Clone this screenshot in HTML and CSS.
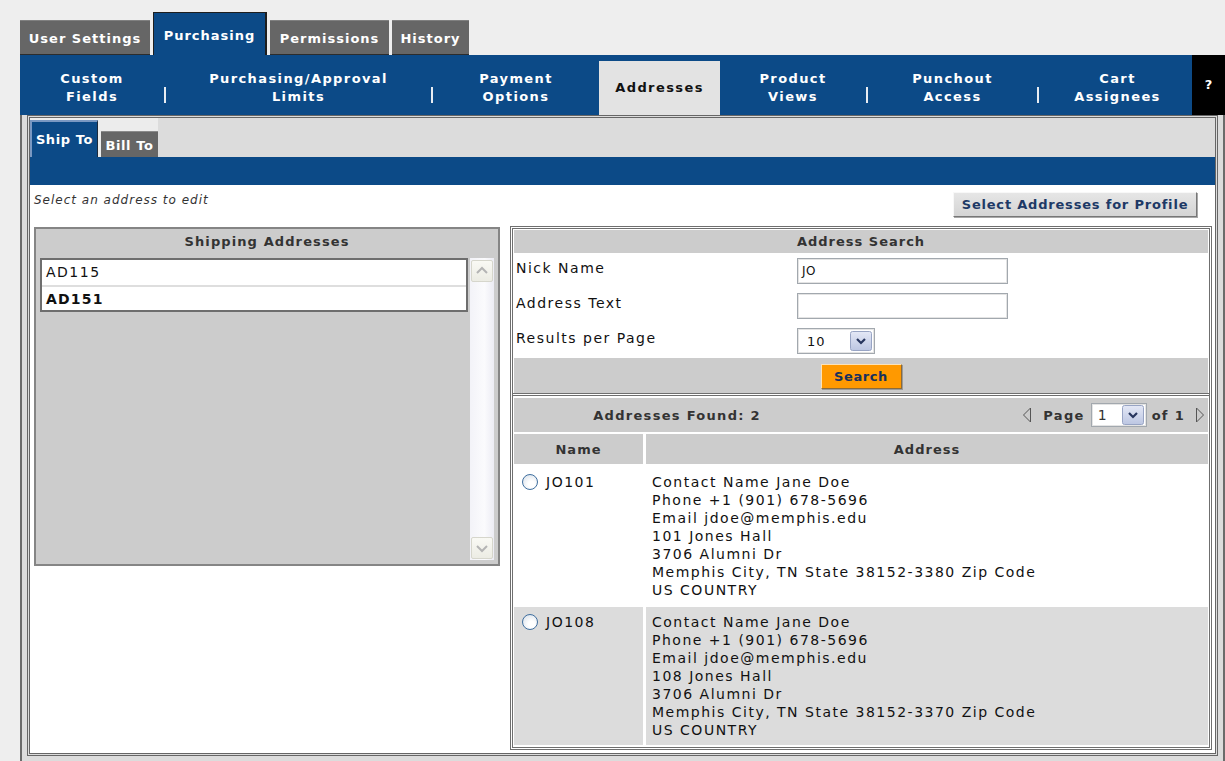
FILE: index.html
```html
<!DOCTYPE html>
<html lang="en">
<head>
<meta charset="utf-8">
<title>Purchasing - Addresses</title>
<link rel="stylesheet" href="styles.css">
</head>
<body>
<div class="page">
  <nav class="top-tabs">
    <a class="ttab t-user">User Settings</a>
    <a class="ttab t-purch current">Purchasing</a>
    <a class="ttab t-perm">Permissions</a>
    <a class="ttab t-hist">History</a>
  </nav>

  <nav class="subnav">
    <a class="nav-item n1">Custom<br>Fields</a>
    <span class="nav-sep"></span>
    <a class="nav-item n2">Purchasing/Approval<br>Limits</a>
    <span class="nav-sep"></span>
    <a class="nav-item n3">Payment<br>Options</a>
    <a class="nav-item n4 current">Addresses</a>
    <a class="nav-item n5">Product<br>Views</a>
    <span class="nav-sep"></span>
    <a class="nav-item n6">Punchout<br>Access</a>
    <span class="nav-sep"></span>
    <a class="nav-item n7">Cart<br>Assignees</a>
    <a class="nav-help">?</a>
  </nav>

  <div class="shell">
    <div class="frame">
      <div class="addr-tabs">
        <a class="atab ship">Ship To</a>
        <a class="atab bill">Bill To</a>
      </div>
      <div class="bluebar"></div>

      <div class="content">
        <div class="toolbar">
          <span class="hint">Select an address to edit</span>
          <button class="btn-profile" type="button">Select Addresses for Profile</button>
        </div>

        <div class="panels">
          <!-- saved shipping addresses -->
          <section class="ship-panel">
            <h2 class="ship-head">Shipping Addresses</h2>
            <div class="ship-body">
              <ul class="addr-list">
                <li>AD115</li>
                <li class="sel">AD151</li>
              </ul>
              <div class="scrollbar">
                <span class="sb-btn"><svg width="22" height="22" viewBox="0 0 22 22"><polyline points="6,13 11,8 16,13" fill="none" stroke="#b4b4b4" stroke-width="2"/></svg></span>
                <span class="sb-btn"><svg width="22" height="22" viewBox="0 0 22 22"><polyline points="6,9 11,14 16,9" fill="none" stroke="#b4b4b4" stroke-width="2"/></svg></span>
              </div>
            </div>
          </section>

          <!-- search form and results -->
          <section class="search-panel">
            <div class="search-box">
              <h2 class="search-head">Address Search</h2>
              <div class="form">
                <label class="f-label">Nick Name</label>
                <div class="f-ctrl"><span class="field">JO</span></div>
                <label class="f-label">Address Text</label>
                <div class="f-ctrl"><span class="field"></span></div>
                <label class="f-label">Results per Page</label>
                <div class="f-ctrl">
                  <span class="combo per-page"><span class="combo-val">10</span>
                    <svg class="combo-btn" width="22" height="20" viewBox="0 0 22 20"><defs><linearGradient id="cb1" x1="0" y1="0" x2="0" y2="1"><stop offset="0" stop-color="#e4e8f6"/><stop offset="1" stop-color="#bcc6e2"/></linearGradient></defs><rect x="0.5" y="0.5" width="21" height="19" rx="2" fill="url(#cb1)" stroke="#98a4c4"/><polyline points="7,8 11,12 15,8" fill="none" stroke="#27355e" stroke-width="2.2"/></svg>
                  </span>
                </div>
              </div>
              <div class="search-bar"><button class="btn-search" type="button">Search</button></div>
            </div>

            <div class="results">
              <div class="res-head">
                <span class="found">Addresses Found: 2</span>
                <span class="pager">
                  <svg class="tri" width="10" height="16" viewBox="0 0 10 16"><polygon points="8.5,1 1.5,8 8.5,15" fill="none" stroke="#555" stroke-width="1"/></svg>
                  <span class="pg-label">Page</span>
                  <span class="combo page-sel"><span class="combo-val">1</span>
                    <svg class="combo-btn" width="22" height="20" viewBox="0 0 22 20"><defs><linearGradient id="cb2" x1="0" y1="0" x2="0" y2="1"><stop offset="0" stop-color="#e4e8f6"/><stop offset="1" stop-color="#bcc6e2"/></linearGradient></defs><rect x="0.5" y="0.5" width="21" height="19" rx="2" fill="url(#cb2)" stroke="#98a4c4"/><polyline points="7,8 11,12 15,8" fill="none" stroke="#27355e" stroke-width="2.2"/></svg>
                  </span>
                  <span class="pg-label">of 1</span>
                  <svg class="tri" width="10" height="16" viewBox="0 0 10 16"><polygon points="1.5,1 8.5,8 1.5,15" fill="none" stroke="#555" stroke-width="1"/></svg>
                </span>
              </div>

              <div class="col-head">Name</div>
              <div class="col-head">Address</div>

              <div class="cell name"><span class="radio"></span>JO101</div>
              <div class="cell addr">Contact Name Jane Doe<br>Phone +1 (901) 678-5696<br>Email jdoe@memphis.edu<br>101 Jones Hall<br>3706 Alumni Dr<br>Memphis City, TN State 38152-3380 Zip Code<br>US COUNTRY</div>

              <div class="cell name alt"><span class="radio"></span>JO108</div>
              <div class="cell addr alt">Contact Name Jane Doe<br>Phone +1 (901) 678-5696<br>Email jdoe@memphis.edu<br>108 Jones Hall<br>3706 Alumni Dr<br>Memphis City, TN State 38152-3370 Zip Code<br>US COUNTRY</div>
            </div>
          </section>
        </div>
      </div>
    </div>
  </div>
</div>
</body>
</html>
```

FILE: styles.css
```css
* { box-sizing: border-box; }

html, body { margin: 0; padding: 0; }

body {
  width: 1225px;
  height: 761px;
  overflow: hidden;
  background: #eeeeee;
  font-family: "DejaVu Sans", Verdana, sans-serif;
  font-size: 14px;
  letter-spacing: 1.5px;
  color: #111;
}

a { text-decoration: none; cursor: pointer; }

.page { padding: 12px 0 0 20px; }

/* ---------- top level tabs ---------- */
.top-tabs {
  display: flex;
  align-items: flex-end;
  gap: 3px;
  height: 43px;
}

.ttab {
  display: flex;
  align-items: center;
  justify-content: center;
  height: 35px;
  padding-top: 2px;
  background: #666666;
  color: #fff;
  font-weight: bold;
  font-size: 13px;
  letter-spacing: 1px;
  border-top: 1px solid #808080;
  border-bottom: 1px solid #2c2c2c;
}

.t-user { width: 130px; }
.t-purch { width: 114px; }
.t-perm { width: 119px; }
.t-hist { width: 77px; }

.ttab.current {
  height: 43px;
  background: #0c4a87;
  border: 1px solid #1e1e1e;
  border-right-width: 2px;
  border-bottom: none;
  padding-top: 2px;
}

/* ---------- section navigation ---------- */
.subnav {
  display: flex;
  height: 60px;
  background: #0c4a87;
  color: #fff;
  font-weight: bold;
  font-size: 13px;
  letter-spacing: 1.4px;
  line-height: 18px;
}

.nav-item {
  display: flex;
  align-items: center;
  justify-content: center;
  text-align: center;
  padding-top: 6px;
  color: #fff;
}

.n1 { width: 144px; }
.n2 { width: 265px; }
.n3 { width: 166px; }
.n4 { width: 121px; }
.n5 { width: 146px; }
.n6 { width: 169px; }
.n7 { width: 153px; padding-left: 4px; }

.nav-item.current {
  margin-top: 6px;
  padding-top: 0;
  background: #e3e3e3;
  color: #111;
}

.nav-sep {
  align-self: flex-start;
  width: 2px;
  height: 16px;
  margin-top: 32px;
  background: #e8ecf2;
}

.nav-help {
  display: flex;
  align-items: center;
  justify-content: center;
  width: 33px;
  background: #000;
  color: #fff;
  letter-spacing: 0;
}

/* ---------- framed work area ---------- */
.shell {
  background: #dcdcdc;
  border-left: 2px solid #6b6b6b;
  border-right: 2px solid #6b6b6b;
  padding: 0 5px 5px 5px;
}

.frame {
  border: 3px double #666666;
  background: #dcdcdc;
}

.addr-tabs {
  display: inline-flex;
  align-items: flex-end;
  gap: 3px;
  padding-top: 2px;
  background: #ececec;
  vertical-align: bottom;
}

.atab {
  display: flex;
  align-items: center;
  justify-content: center;
  color: #fff;
  font-weight: bold;
  font-size: 13px;
  letter-spacing: 0.6px;
}

.atab.ship {
  width: 68px;
  height: 37px;
  background: #0c4a87;
  border-top: 2px solid #7a98c2;
  border-left: 2px solid #7a98c2;
  border-right: 1px solid #1c2a3c;
}

.atab.bill {
  width: 57px;
  height: 26px;
  padding-top: 2px;
  background: #666666;
  border-top: 1px solid #8a8a8a;
}

.bluebar {
  height: 28px;
  background: #0c4a87;
}

.content {
  background: #fff;
  padding: 0 3px 3px 4px;
}

.toolbar {
  display: flex;
  justify-content: space-between;
  align-items: flex-start;
  height: 41px;
  padding-right: 15px;
}

.hint {
  margin-top: 8px;
  font-style: italic;
  font-size: 12px;
  line-height: 14px;
  letter-spacing: 1px;
  color: #333;
}

.btn-profile {
  margin-top: 7px;
  width: 244px;
  height: 25px;
  padding: 0;
  background: linear-gradient(#e6e6e6, #d4d4d4);
  border: 1px solid;
  border-color: #f8f8f8 #777 #777 #f8f8f8;
  box-shadow: 1px 1px 0 #a8a8a8;
  font-family: "DejaVu Sans", Verdana, sans-serif;
  font-weight: bold;
  font-size: 13px;
  letter-spacing: 0.8px;
  color: #1d3966;
}

.panels {
  display: flex;
  align-items: flex-start;
  gap: 10px;
}

/* ---------- shipping address list ---------- */
.ship-panel {
  width: 466px;
  margin-top: 1px;
  background: #cccccc;
  border: 2px solid #858585;
  padding: 0 4px 4px 4px;
}

.ship-head {
  margin: 0;
  height: 29px;
  line-height: 26px;
  text-align: center;
  font-size: 13px;
  letter-spacing: 1.1px;
  color: #333;
}

.ship-body {
  display: flex;
  gap: 2px;
  height: 302px;
}

.addr-list {
  list-style: none;
  margin: 0;
  padding: 0;
  width: 428px;
  align-self: flex-start;
  background: #fff;
  border: 2px solid #6e6e6e;
}

.addr-list li {
  height: 25px;
  line-height: 25px;
  padding-left: 4px;
}

.addr-list li + li { border-top: 2px solid #dedede; height: 25px; }

.addr-list li.sel { font-weight: bold; letter-spacing: 1.2px; }

.scrollbar {
  width: 24px;
  display: flex;
  flex-direction: column;
  justify-content: space-between;
  padding: 2px 1px 1px 1px;
  background: linear-gradient(90deg, #f3f3f8, #fbfbfd 60%, #ececf4);
}

.sb-btn {
  display: block;
  width: 22px;
  height: 22px;
  background: linear-gradient(#f9f9f4, #ecece4);
  border: 1px solid #d6d6cc;
  border-radius: 2px;
}

.sb-btn svg { display: block; margin: -1px; }

/* ---------- search panel ---------- */
.search-panel {
  width: 702px;
  border: 3px double #6f6f6f;
  background: #fff;
}

.search-box { padding: 1px 1px 0 1px; }

.search-head {
  margin: 0;
  height: 23px;
  line-height: 23px;
  text-align: center;
  background: #cccccc;
  font-size: 13px;
  letter-spacing: 1px;
  color: #333;
}

.form {
  display: grid;
  grid-template-columns: 283px 1fr;
  grid-auto-rows: 35px;
}

.f-label {
  padding: 7px 0 0 2px;
  line-height: 16px;
  color: #111;
}

.f-ctrl { padding-top: 5px; }

.field {
  display: block;
  width: 211px;
  height: 26px;
  border: 1px solid #a2a8ae;
  box-shadow: inset 0 0 0 1px #e4e4e4;
  padding: 0 4px;
  font-size: 12px;
  line-height: 24px;
  letter-spacing: 0.4px;
}

.combo {
  display: flex;
  align-items: center;
  justify-content: space-between;
  height: 26px;
  border: 1px solid #a2a8ae;
  box-shadow: inset 0 0 0 1px #e4e4e4;
  background: #fff;
  padding: 0 2px 0 9px;
}

.combo-val { font-size: 13px; letter-spacing: 1px; }

.combo-btn { display: block; }

.per-page { width: 78px; }

.search-bar {
  height: 35px;
  background: #cccccc;
  display: flex;
  justify-content: center;
  padding-top: 6px;
}

.btn-search {
  width: 81px;
  height: 25px;
  padding: 0;
  background: #ff9900;
  border: 1px solid;
  border-color: #fde2b6 #8a6a3a #8a6a3a #fde2b6;
  box-shadow: 1px 1px 0 #9a9a9a;
  font-family: "DejaVu Sans", Verdana, sans-serif;
  font-weight: bold;
  font-size: 13px;
  letter-spacing: 0.6px;
  color: #17305e;
}

/* ---------- results ---------- */
.results {
  display: grid;
  grid-template-columns: 129px 1fr;
  column-gap: 3px;
  row-gap: 2px;
  padding: 2px 1px 2px 1px;
  border-top: 3px double #6f6f6f;
}

.res-head {
  grid-column: 1 / -1;
  display: flex;
  align-items: center;
  height: 34px;
  background: #cccccc;
  font-weight: bold;
  font-size: 13px;
  letter-spacing: 1.3px;
  color: #333;
}

.found {
  width: 47%;
  text-align: center;
}

.pager {
  flex: 1;
  display: flex;
  align-items: center;
  justify-content: flex-end;
  padding-right: 3px;
}

.tri { display: block; }

.pager .tri:first-child { margin-right: 11px; }
.pager .tri:last-child { margin-left: 10px; }

.page-sel {
  width: 56px;
  height: 24px;
  margin: 0 5px 0 6px;
  padding-left: 6px;
  font-weight: normal;
}

.page-sel .combo-val { font-size: 14px; }

.col-head {
  height: 30px;
  line-height: 31px;
  background: #cccccc;
  text-align: center;
  font-weight: bold;
  font-size: 13px;
  letter-spacing: 1px;
  color: #333;
}

.cell {
  line-height: 18px;
  padding: 7px 6px 6px 6px;
}

.cell.name {
  display: flex;
  align-items: flex-start;
  padding-left: 8px;
}

.cell.alt { background: #dcdcdc; padding-top: 6px; }

.radio {
  flex: 0 0 16px;
  width: 16px;
  height: 16px;
  margin: 1px 8px 0 0;
  border-radius: 50%;
  border: 1px solid #3f6f9f;
  background: radial-gradient(circle at 60% 65%, #ffffff 25%, #e2e8ef 75%, #c8d2de 100%);
}
```
